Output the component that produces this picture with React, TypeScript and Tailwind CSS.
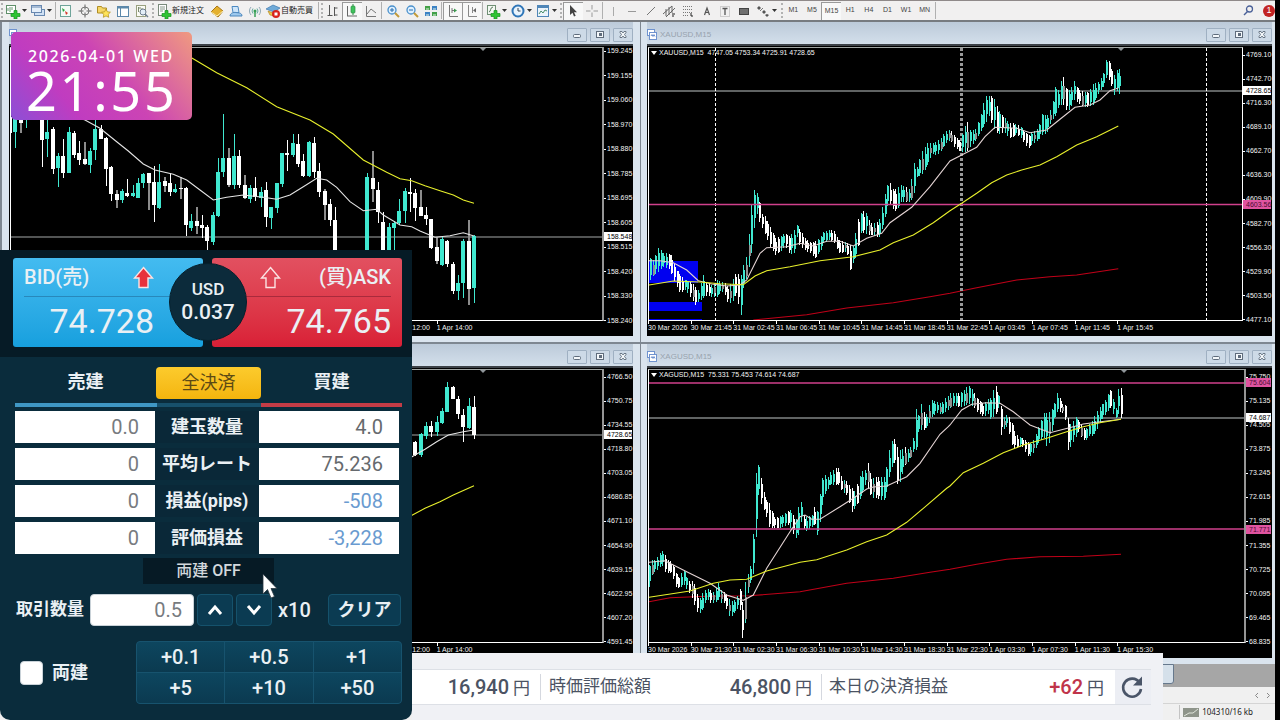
import type { ReactNode } from 'react';

type Pt = [number, number];
type Candle = [x: number, high: number, top: number, bottom: number, low: number, kind: 'c' | 'w' | 'g'];
type Range = [x: number, high: number, low: number];

const AQUA = '#40e8d0';
const YELLOW = '#e8f02c';
const RED = '#c00018';
const PINK = '#d0408c';

/* Series are kept in thirds of a pixel, relative to the plot origin. */
const shift = (points: Pt[], dx: number, dy: number): Pt[] => points.map(([x, y]) => [x + dx, y + dy]);
const shiftRange = (r: Range[], dx: number, dy: number): Range[] => r.map(([x, h, l]) => [x + dx, h + dy, l + dy]);
const shiftCandles = (list: Candle[], dx: number, dy: number): Candle[] =>
  list.map(([x, h, t, b, l, k]) => [x + dx, h + dy, t + dy, b + dy, l + dy, k]);

function Line({ points, color }: { points: Pt[]; color: string }) {
  return (
    <polyline
      points={points.map(([x, y]) => `${(x / 3).toFixed(1)},${(y / 3).toFixed(1)}`).join(' ')}
      fill="none"
      stroke={color}
      strokeWidth="1.1"
    />
  );
}

function Candles({ list }: { list: Candle[] }) {
  return (
    <g shapeRendering="crispEdges">
      {list.map(([x, h, t, b, l, k], i) => {
        const cx = Math.round(x / 3 - 0.5);
        const color = k === 'c' ? AQUA : '#ffffff';
        return (
          <g key={i}>
            <rect x={k === 'g' ? cx - 1 : cx} y={h / 3} width={k === 'g' ? 2 : 1} height={(l - h) / 3} fill={k === 'g' ? '#8c8c8c' : color} />
            <rect x={cx - 2} y={t / 3} width={4} height={Math.max(1, (b - t) / 3)} fill={color} />
          </g>
        );
      })}
    </g>
  );
}

function DenseCandles({ ranges }: { ranges: Range[] }) {
  const out: ReactNode[] = [];
  const last = ranges[ranges.length - 1][0];
  const at = (x: number): [number, number] => {
    let i = 0;
    while (i < ranges.length - 2 && ranges[i + 1][0] < x) i++;
    const [x0, h0, l0] = ranges[i];
    const [x1, h1, l1] = ranges[i + 1];
    const f = Math.min(1, Math.max(0, (x - x0) / (x1 - x0)));
    return [h0 + (h1 - h0) * f, l0 + (l1 - l0) * f];
  };
  let n = 0;
  for (let x = ranges[0][0]; x <= last; x += 8) {
    const r = Math.abs(Math.sin(n * 12.9898) * 43758.5453) % 1;
    const q = Math.abs(Math.sin(n * 78.233 + 4) * 12543.123) % 1;
    const [h, l] = at(x);
    const [nh, nl] = at(x + 8);
    const [ph, pl] = at(x - 8);
    const size = l - h;
    const slope = nh + nl - ph - pl;
    const up = slope < -12 ? q > 0.1 : slope > 12 ? q > 0.75 : q > 0.4;
    const top = h + size * (0.05 + r * 0.3);
    const bottom = l - size * (0.05 + q * 0.3);
    const grey = r > 0.86;
    const color = up ? AQUA : '#ffffff';
    const px = Math.round(x / 3);
    out.push(
      <g key={n}>
        <rect x={px} y={h / 3} width={1} height={size / 3} fill={color} />
        <rect x={px} y={top / 3} width={2} height={Math.max(1, (bottom - top) / 3)} fill={grey ? '#909090' : color} />
      </g>,
    );
    n++;
  }
  return <g shapeRendering="crispEdges">{out}</g>;
}

function Level({ y, color }: { y: number; color: string }) {
  return <line x1="0" x2="100%" y1={y} y2={y} stroke={color} strokeWidth="1.3" />;
}

function Marker({ x }: { x: number }) {
  return <path d={`M${x - 3} 0h6l-3 3z`} fill="#8f9599" />;
}

/* ---------- chart data ---------- */

const jpyCandles: Candle[] = [
  ...shiftCandles(
    [
      [31, 10, 20, 68, 90, 'w'], [47, 20, 20, 65, 115, 'c'], [63, 20, 30, 40, 70, 'g'], [79, 20, 20, 30, 55, 'c'],
      [127, 20, 20, 90, 172, 'w'], [143, 20, 65, 88, 140, 'c'], [159, 50, 58, 178, 192, 'w'], [175, 130, 138, 175, 230, 'c'],
      [191, 88, 138, 188, 205, 'w'], [207, 52, 65, 190, 190, 'c'], [223, 62, 68, 135, 145, 'w'], [239, 92, 128, 150, 165, 'w'],
      [255, 95, 148, 163, 165, 'g'], [271, 115, 123, 166, 190, 'c'], [287, 20, 58, 120, 150, 'c'], [303, 45, 58, 87, 87, 'w'],
      [319, 82, 85, 177, 228, 'w'], [335, 168, 170, 252, 272, 'w'], [351, 240, 252, 270, 293, 'g'], [367, 238, 243, 270, 280, 'c'],
      [383, 207, 250, 258, 262, 'w'], [399, 225, 250, 258, 260, 'c'], [415, 205, 218, 263, 263, 'c'], [431, 190, 193, 218, 235, 'c'],
      [447, 190, 190, 218, 300, 'g'], [463, 168, 216, 285, 335, 'w'], [479, 162, 216, 293, 298, 'c'], [495, 200, 213, 228, 245, 'g'],
      [511, 190, 220, 246, 258, 'w'], [527, 222, 236, 246, 248, 'c'], [543, 200, 233, 238, 268, 'g'], [559, 230, 235, 345, 378, 'w'],
      [575, 312, 333, 353, 363, 'c'], [591, 290, 333, 348, 372, 'g'], [607, 315, 345, 353, 385, 'w'], [623, 345, 352, 392, 430, 'w'],
      [639, 305, 315, 397, 405, 'c'], [655, 143, 187, 318, 322, 'c'], [671, 12, 145, 187, 200, 'c'], [687, 115, 145, 226, 230, 'g'],
      [703, 72, 137, 225, 237, 'c'], [719, 120, 137, 226, 233, 'w'], [735, 195, 226, 265, 268, 'g'], [751, 225, 235, 268, 280, 'c'],
      [767, 200, 235, 262, 273, 'w'], [783, 232, 245, 265, 290, 'c'], [799, 215, 240, 322, 350, 'w'], [815, 290, 290, 323, 358, 'c'],
      [831, 218, 220, 293, 308, 'c'], [847, 128, 130, 222, 232, 'c'], [863, 90, 130, 134, 182, 'w'], [879, 72, 100, 136, 140, 'c'],
      [895, 72, 102, 162, 170, 'w'], [911, 132, 152, 197, 202, 'w'], [927, 93, 95, 198, 200, 'c'], [943, 82, 98, 185, 205, 'w'],
      [959, 158, 183, 245, 262, 'w'], [975, 238, 242, 285, 330, 'g'], [991, 268, 283, 330, 347, 'w'], [1007, 290, 330, 430, 430, 'w'],
      [1103, 190, 202, 450, 450, 'c'], [1119, 122, 205, 236, 275, 'g'], [1135, 215, 240, 305, 338, 'w'], [1151, 305, 335, 430, 430, 'w'],
      [1167, 340, 352, 430, 430, 'c'], [1183, 332, 340, 355, 430, 'c'], [1199, 268, 303, 340, 345, 'c'], [1215, 235, 242, 303, 340, 'c'],
    ],
    -33,
    186,
  ),
  ...shiftCandles(
    [
      [31, 475, 516, 522, 575, 'w'], [47, 508, 520, 565, 602, 'w'], [63, 510, 562, 587, 588, 'g'], [79, 562, 585, 598, 615, 'w'],
      [95, 597, 597, 683, 687, 'w'], [111, 650, 680, 723, 733, 'g'], [127, 648, 658, 735, 738, 'c'], [143, 660, 663, 733, 740, 'w'],
      [159, 725, 732, 813, 822, 'w'], [175, 765, 788, 812, 840, 'c'], [191, 658, 663, 788, 833, 'c'], [207, 600, 663, 808, 855, 'g'],
      [223, 645, 647, 805, 850, 'c'],
    ],
    1167,
    -84,
  ),
];

const jpyFast: Pt[] = [
  ...shift([[180, 5], [255, 30], [300, 55], [350, 95], [385, 123], [430, 162], [465, 180], [520, 193], [560, 210], [600, 240], [640, 270], [680, 262], [730, 255], [790, 262], [830, 268], [870, 255], [910, 230], [950, 205], [980, 210], [1010, 232], [1050, 275], [1090, 302], [1130, 298], [1150, 315], [1200, 345]], -33, 186),
  ...shift([[35, 620], [60, 633], [105, 652], [150, 647], [190, 638], [222, 648]], 1167, -84),
];
const jpySlow: Pt[] = [
  ...shift([[540, -175], [577, -155], [650, -112], [740, -67], [830, -10], [930, 30], [1000, 72], [1090, 150], [1160, 187], [1200, 206]], -33, 186),
  ...shift([[35, 482], [75, 497], [120, 512], [160, 525], [190, 540], [222, 550]], 1167, -84),
];

const gold2Candles = shiftCandles(
  [
    [47, 318, 322, 360, 363, 'w'], [63, 295, 298, 360, 365, 'c'], [79, 262, 272, 303, 313, 'c'], [95, 257, 272, 292, 305, 'w'],
    [111, 243, 262, 290, 303, 'c'], [127, 218, 228, 263, 267, 'c'], [143, 142, 155, 230, 232, 'c'], [159, 152, 155, 193, 193, 'w'],
    [175, 183, 192, 238, 252, 'w'], [191, 223, 240, 275, 320, 'w'], [207, 190, 213, 280, 283, 'c'], [223, 183, 215, 300, 312, 'w'],
  ],
  1167,
  -105,
);
const gold2Fast = shift([[0, 385], [36, 365], [75, 343], [110, 320], [145, 300], [190, 290], [222, 285]], 1167, -105);
const gold2Slow = shift([[0, 556], [36, 541], [75, 520], [120, 500], [160, 480], [222, 452]], 1167, -105);

const goldRanges: Range[] = [
  ...shiftRange(
    [
      [30, 715, 780], [40, 720, 765], [55, 680, 755], [70, 700, 740], [85, 700, 745], [95, 705, 765], [105, 745, 790], [120, 765, 820],
      [135, 780, 810], [150, 785, 830], [165, 800, 855], [175, 810, 845], [190, 765, 835], [200, 790, 825], [215, 795, 832],
      [230, 780, 830], [245, 785, 815], [255, 790, 825], [265, 800, 855], [280, 775, 840], [290, 755, 820], [296, 765, 870], [302, 765, 885],
      [308, 740, 810], [320, 705, 770], [330, 600, 720], [338, 510, 680], [346, 510, 570], [355, 530, 600], [365, 580, 620],
      [375, 590, 645], [390, 620, 680], [405, 655, 705], [420, 650, 695], [435, 640, 680], [450, 650, 705], [462, 630, 700],
      [470, 615, 650], [480, 630, 680], [495, 655, 690], [510, 665, 700], [525, 665, 715], [540, 650, 695], [550, 635, 670],
      [565, 630, 660], [580, 630, 665], [595, 660, 700], [610, 665, 700], [620, 665, 690], [628, 675, 755], [640, 680, 725],
      [650, 610, 705], [660, 580, 640], [675, 570, 640], [690, 610, 645], [705, 610, 650], [720, 595, 650], [730, 540, 610],
      [740, 495, 560], [750, 490, 555], [760, 510, 570], [770, 505, 575], [780, 495, 545], [795, 500, 545], [810, 510, 545],
      [820, 425, 530], [830, 440, 470], [845, 395, 465], [860, 370, 440], [875, 370, 400], [890, 365, 405], [905, 350, 390],
      [920, 330, 365], [930, 328, 360],
    ],
    -27,
    -84,
  ),
  ...shiftRange(
    [
      [15, 350, 385], [30, 360, 395], [50, 300, 395], [60, 330, 380], [75, 330, 365], [90, 290, 335], [105, 230, 315], [115, 228, 285],
      [128, 228, 320], [145, 270, 345], [160, 290, 335], [180, 310, 355], [195, 310, 345], [210, 320, 350], [225, 335, 375],
      [235, 345, 385], [250, 335, 370], [265, 325, 360], [275, 280, 345], [290, 290, 340], [305, 260, 300], [315, 200, 290],
      [325, 210, 260], [338, 160, 250], [345, 200, 270], [360, 215, 270], [370, 180, 240], [385, 210, 250], [400, 215, 260],
      [415, 215, 260], [430, 190, 255], [445, 185, 220], [460, 160, 200], [468, 120, 175], [478, 125, 180], [485, 150, 200],
      [490, 170, 228], [498, 150, 210], [510, 145, 225],
    ],
    903,
    -84,
  ),
];
const goldFast: Pt[] = [
  ...shift([[27, 722], [60, 722], [100, 728], [140, 750], [175, 782], [215, 792], [260, 798], [300, 795], [320, 780], [340, 740], [360, 700], [380, 683], [440, 680], [480, 670], [520, 678], [560, 664], [600, 664], [640, 678], [680, 655], [725, 640], [750, 608], [815, 562], [870, 500], [930, 423]], -27, -84),
  ...shift([[35, 405], [80, 382], [105, 350], [135, 322], [200, 325], [240, 338], [290, 330], [330, 298], [375, 262], [420, 255], [450, 240], [480, 212], [505, 204]], 903, -84),
];
const goldSlow: Pt[] = [
  ...shift([[27, 795], [100, 783], [180, 786], [240, 791], [310, 794], [345, 768], [380, 752], [450, 740], [540, 722], [640, 710], [720, 690], [760, 668], [820, 645], [880, 608], [930, 572]], -27, -84),
  ...shift([[35, 550], [80, 520], [125, 488], [170, 465], [215, 450], [270, 435], [320, 410], [380, 375], [440, 350], [505, 318]], 903, -84),
];
const goldLong: Pt[] = [
  ...shift([[340, 900], [370, 897], [500, 884], [620, 864], [760, 848], [870, 830]], -27, -84),
  ...shift([[0, 820], [80, 803], [200, 780], [300, 770], [380, 765], [505, 746]], 903, -84),
];

const silverRanges: Range[] = [
  ...shiftRange(
    [
      [27, 690, 755], [35, 675, 720], [45, 675, 710], [55, 660, 700], [65, 645, 690], [75, 660, 710], [85, 680, 715], [95, 675, 715],
      [105, 710, 755], [115, 725, 760], [130, 705, 750], [145, 740, 770], [160, 735, 800], [170, 775, 830], [178, 790, 835],
      [190, 770, 820], [200, 760, 790], [210, 765, 805], [220, 770, 805], [235, 745, 795], [245, 770, 805], [255, 770, 805],
      [265, 790, 845], [280, 800, 840], [290, 785, 820], [300, 760, 825], [307, 800, 908], [316, 735, 860], [325, 710, 750],
      [335, 680, 740], [340, 578, 710], [348, 392, 590], [355, 390, 480], [365, 440, 515], [375, 490, 530], [388, 505, 580],
      [400, 545, 580], [415, 545, 580], [430, 540, 575], [445, 525, 570], [455, 525, 585], [465, 560, 612], [475, 515, 600],
      [483, 500, 560], [490, 540, 580], [500, 545, 590], [515, 540, 575], [525, 510, 570], [532, 530, 605], [540, 470, 555],
      [550, 410, 490], [560, 430, 465], [572, 410, 450], [585, 400, 450], [595, 400, 450], [605, 430, 470], [620, 440, 480],
      [635, 460, 530], [645, 470, 520], [655, 430, 500], [665, 410, 480], [675, 405, 450], [683, 385, 460], [695, 430, 490],
      [710, 425, 490], [720, 425, 495], [735, 425, 495], [742, 375, 455], [750, 325, 410], [762, 310, 375], [772, 340, 455],
      [782, 345, 435], [795, 335, 390], [808, 345, 375], [820, 305, 350], [828, 210, 345], [835, 240, 290], [845, 200, 285],
      [855, 250, 285], [865, 215, 270], [875, 195, 245], [890, 200, 235], [905, 205, 240], [915, 190, 230],
    ],
    -27,
    -105,
  ),
  ...shiftRange(
    [
      [0, 175, 220], [12, 175, 210], [25, 175, 215], [40, 165, 215], [55, 150, 205], [70, 170, 215], [85, 195, 235], [100, 205, 245],
      [115, 190, 235], [122, 190, 255], [135, 145, 240], [145, 180, 220], [150, 200, 305], [162, 250, 280], [172, 235, 275],
      [185, 265, 330], [195, 295, 345], [205, 305, 335], [218, 310, 335], [230, 320, 360], [240, 325, 365], [252, 310, 350],
      [265, 275, 325], [280, 235, 305], [290, 235, 335], [300, 230, 320], [310, 215, 255], [322, 170, 230], [335, 205, 230],
      [345, 210, 255], [352, 245, 345], [362, 270, 335], [375, 245, 310], [385, 255, 290], [395, 270, 310], [405, 285, 320],
      [415, 270, 305], [430, 250, 300], [440, 230, 285], [450, 215, 260], [465, 195, 240], [480, 160, 215], [490, 195, 240],
      [497, 220, 250], [506, 155, 235], [516, 160, 255],
    ],
    903,
    -105,
  ),
];
const silverFast: Pt[] = [
  ...shift([[27, 682], [75, 677], [140, 710], [210, 745], [260, 780], [310, 796], [340, 780], [380, 700], [450, 590], [480, 545], [495, 540], [515, 553], [540, 553], [600, 515], [640, 490], [680, 462], [700, 456], [740, 453], [800, 425], [840, 385], [900, 298], [925, 275]], -27, -105),
  ...shift([[0, 270], [35, 225], [65, 208], [110, 203], [150, 205], [190, 230], [240, 270], [300, 293], [370, 275], [400, 267], [440, 262], [513, 253]], 903, -105),
];
const silverSlow: Pt[] = [
  ...shift([[27, 787], [150, 768], [220, 745], [270, 735], [320, 733], [380, 708], [480, 682], [530, 674], [620, 645], [680, 620], [740, 600], [800, 562], [850, 520], [920, 460]], -27, -105),
  ...shift([[0, 453], [40, 413], [100, 385], [160, 353], [220, 330], [290, 310], [350, 290], [400, 275], [450, 263], [513, 253]], 903, -105),
];
const silverLong: Pt[] = [
  ...shift([[27, 800], [90, 788], [200, 784], [330, 782], [480, 770], [620, 745], [760, 730], [870, 712]], -27, -105),
  ...shift([[0, 703], [80, 688], [170, 673], [270, 665], [400, 664], [513, 658]], 903, -105),
];

/* ---------- chart windows ---------- */

type Tag = { text: string; className: string };

type WindowProps = {
  name: string;
  title?: string;
  summary?: string;
  frame: string;
  edge: string;
  axis: string;
  prices: string[];
  times: string[];
  timesClass: string;
  tags: Tag[];
  children: ReactNode;
};

function ChartWindow({ name, title, summary, frame, edge, axis, prices, times, timesClass, tags, children }: WindowProps) {
  const control = 'flex h-[14px] w-5 items-center justify-center rounded-[1px] border border-[#9fb0c2] bg-[#cddae7] text-[#5f6c7c]';
  return (
    <section aria-label={name} className={`flex min-w-0 flex-col bg-[#dae4ee] pb-[6px] ${frame}`}>
      <header className="flex h-[22px] shrink-0 items-center bg-gradient-to-b from-[#bccad9] to-[#d3dfeb] pt-[3px]">
        <svg width="10" height="11" viewBox="0 0 10 11" fill="#fff" stroke="#6f93cf" aria-hidden="true">
          <rect x=".5" y=".5" width="7" height="6" />
          <rect x="2.5" y="3.5" width="7" height="7" />
          <path d="M4 7l1-1.500 1 2 1-2 1 2" fill="none" />
        </svg>
        <h2 className="ml-[3px] flex-1 text-[8px] text-[#98a3ae]">{title}</h2>
        <div className="flex gap-[3px]">
          <button type="button" aria-label="Minimize" className={control}>
            <svg width="8" height="6" viewBox="0 0 8 6"><rect x=".5" y="2.500" width="7" height="3" rx="1" fill="#f4f8fb" stroke="currentColor" /></svg>
          </button>
          <button type="button" aria-label="Maximize" className={control}>
            <svg width="8" height="7" viewBox="0 0 8 7"><rect x=".5" y=".5" width="7" height="6" fill="#f4f8fb" stroke="currentColor" /><rect x="3" y="2" width="3" height="3" fill="currentColor" /></svg>
          </button>
          <button type="button" aria-label="Close" className={control}>
            <svg width="8" height="7" viewBox="0 0 8 7"><path d="M1 .5h2l1 1.500 1-1.500h2v1L5.500 3.500 7 5.500v1H5L4 5 3 6.500H1v-1l1.500-2L1 1.500z" fill="#f4f8fb" stroke="currentColor" strokeWidth=".9" /></svg>
          </button>
        </div>
      </header>
      <div className="flex flex-1 border-t-2 border-[#3d4248] bg-black pt-px pl-px text-[7px] leading-[8px] text-[#f4f4f4]">
        <div className="flex min-w-0 flex-1 flex-col">
          <div className={`relative flex-1 overflow-hidden border-t border-b border-l border-t-[#a0a5a3] border-b-white border-l-white ${edge}`}>
            <svg width="100%" height="100%" className="absolute inset-0" role="img" aria-label={`${name} chart`}>{children}</svg>
            {summary && (
              <p className="absolute top-px left-[2px] flex items-center gap-[2px] whitespace-pre">
                <svg width="6" height="4" aria-hidden="true"><path d="M0 0h6L3 4z" fill="#fff" /></svg>
                {summary}
              </p>
            )}
          </div>
          <div className="h-[15px] shrink-0 overflow-hidden">
            <div className="grid w-[512px] grid-cols-12 whitespace-nowrap">
              {times.map((t, i) => (
                <span key={t} className={`flex flex-col before:h-[3px] before:w-px before:bg-white ${i === 0 ? timesClass : ''}`}>{t}</span>
              ))}
            </div>
          </div>
        </div>
        <div className={`relative flex shrink-0 flex-col justify-between ${axis}`}>
          {prices.map((p) => (
            <span key={p} className="flex items-center gap-px before:h-px before:w-[2px] before:bg-white">{p}</span>
          ))}
          {tags.map((t) => (
            <span key={t.text} className={`absolute right-px left-0 flex h-[9px] items-center pl-[3px] ${t.className}`}>{t.text}</span>
          ))}
        </div>
      </div>
    </section>
  );
}

const jpyPrices = ['159.245', '159.155', '159.060', '158.970', '158.880', '158.785', '158.695', '158.605', '158.515', '158.420', '158.330', '158.240'];
const goldPrices = ['4769.10', '4742.70', '4716.30', '4689.10', '4662.70', '4636.30', '4609.90', '4582.70', '4556.30', '4529.90', '4503.50', '4477.10'];
const gold2Prices = ['4766.50', '4750.75', '4734.55', '4718.80', '4703.05', '4686.85', '4671.10', '4654.90', '4639.15', '4622.95', '4607.20', '4591.45'];
const silverPrices = ['75.750', '75.135', '74.505', '73.875', '73.245', '72.615', '71.985', '71.355', '70.725', '70.095', '69.465', '68.835'];
const days = ['31 Mar', '31 Mar', '31 Mar', '31 Mar', '31 Mar', '31 Mar', '1 Apr', '1 Apr', '1 Apr', '1 Apr'];
const goldTimes = ['30 Mar 2026', '30 Mar 21:45', ...['02', '06', '10', '14', '18', '22'].map((h, i) => `${days[i]} ${h}:45`), ...['03', '07', '11', '15'].map((h, i) => `${days[6 + i]} ${h}:45`)];
const silverTimes = ['30 Mar 2026', '30 Mar 21:30', ...['02', '06', '10', '14', '18', '22'].map((h, i) => `${days[i]} ${h}:30`), ...['03', '07', '11', '15'].map((h, i) => `${days[6 + i]} ${h}:30`)];
const leftTimes = ['1 Apr 12:00', '1 Apr 14:00'];
const whiteTag = 'bg-white text-black';
const pinkTag = 'bg-[#e054a0] text-[#4a0c30]';

/* ---------- toolbar ---------- */

function Icon({ children }: { children: ReactNode }) {
  return <svg width="16" height="16" viewBox="0 0 16 16" fill="none" strokeWidth="1" className="shrink-0" aria-hidden="true">{children}</svg>;
}

const plus = <path d="M9 7.500h3v3h3v3h-3v2.500H9v-2.500H6v-3h3z" fill="#2fc433" stroke="#159420" strokeWidth=".7" />;

const icons: Record<string, ReactNode> = {
  newChart: <><rect x="1.500" y="2.500" width="9" height="8" fill="#fff" stroke="#5f8f6a" /><path d="M3 8V5M5 9V4M7 7V4" stroke="#6d9a74" />{plus}</>,
  profiles: <><rect x="4.500" y="6.500" width="10" height="6" fill="#cfe0f4" stroke="#6888b0" /><rect x="1.500" y="2.500" width="10" height="7" fill="#e5effa" stroke="#6888b0" /><path d="M2 4h9" stroke="#6888b0" /></>,
  market: <><rect x="2.500" y="2.500" width="10" height="11" fill="#f4fbf6" stroke="#6fa49a" /><path d="M4 5l3 2-2 2z" fill="#2aa745" /><path d="M7 8l3 2-2 2z" fill="#d8362b" /></>,
  target: <><circle cx="8" cy="8" r="4" stroke="#777" /><path d="M8 1.500v5M8 9.500v5M1.500 8h5M9.500 8h5" stroke="#666" /></>,
  navigator: <><path d="M1.500 3.500h4l1 1.500h4v5h-9z" fill="#f6d768" stroke="#b08d25" /><path d="M10 6l1.400 2.800 3 .4-2.200 2.100.5 3L10 12.900l-2.700 1.400.5-3-2.200-2.100 3-.4z" fill="#ffe45a" stroke="#b79622" strokeWidth=".8" /></>,
  terminal: <><rect x="2.500" y="3.500" width="11" height="10" fill="#fff" stroke="#5c88ab" /><path d="M3 4.500h10" stroke="#5c88ab" strokeWidth="2" /><path d="M5.500 5v8" stroke="#5c88ab" /></>,
  tester: <><rect x="2.500" y="2.500" width="9" height="11" fill="#fbfbf4" stroke="#99a07f" /><path d="M4.500 9V4M4.500 5H7M8 9V5" stroke="#7d8a70" /><circle cx="9" cy="9" r="3" fill="#e3eef8" stroke="#6d7c8d" /><path d="M11 11l3 3" stroke="#6d7c8d" strokeWidth="1.500" /></>,
  order: <><rect x="2.500" y="1.500" width="8" height="11" fill="#fff" stroke="#7a8a7c" /><path d="M4 4h5M4 6h5M4 8h3" stroke="#8a9a8c" />{plus}</>,
  book: <><path d="M2 9l6-6 6 5-5 6z" fill="#e4b02e" stroke="#a87615" /><path d="M2 9l6 4 6-5" stroke="#fff3b8" /></>,
  person: <><path d="M4 3.500h6l1 6H5z" fill="#cfe6fa" stroke="#4d8ac2" /><path d="M2 13c0-3 4-4 6-3.500s6 0 6 3.500z" fill="#9ec9ee" stroke="#4d86bb" /></>,
  signal: <><path d="M4 4a6 6 0 000 8M12 4a6 6 0 010 8" stroke="#93aab5" /><path d="M6 5.500a4 4 0 000 5M10 5.500a4 4 0 010 5" stroke="#65a9a0" /><circle cx="8" cy="8" r="1.500" fill="#37a055" /><path d="M8 9v5" stroke="#37a055" strokeWidth="1.500" /></>,
  auto: <><path d="M1 6l7-4 7 3-6 4z" fill="#6faad8" stroke="#3d79ae" strokeWidth=".7" /><path d="M3 8l5 2 4-2-2 5-5-1z" fill="#eec44a" stroke="#b28a1b" strokeWidth=".7" /><circle cx="11" cy="11" r="4" fill="#d8231c" /><rect x="9.500" y="9.500" width="3" height="3" fill="#fff" /></>,
  bars: <path d="M4.500 2v11M2.500 12.500h5M9.500 4v9M9.500 5h3M12.500 12h-3" stroke="#555" />,
  candle: <><path d="M3.500 3v10M3 13h10" stroke="#666" /><rect x="7" y="3" width="4" height="7" rx="1" fill="#3fc25d" stroke="#2c8f44" strokeWidth=".7" /><path d="M9 1v2M9 10v2" stroke="#2c8f44" /></>,
  lineChart: <path d="M3.500 3v10.500H13M4 11l4-5 5 4" stroke="#777" />,
  zoomIn: <><circle cx="7" cy="7" r="4" fill="#dff0ff" stroke="#4a90cc" strokeWidth="1.300" /><path d="M10 10l4 4" stroke="#c39a38" strokeWidth="2" /><path d="M5 7h4M7 5v4" stroke="#2a6fae" /></>,
  zoomOut: <><circle cx="7" cy="7" r="4" fill="#dff0ff" stroke="#4a90cc" strokeWidth="1.300" /><path d="M10 10l4 4" stroke="#c39a38" strokeWidth="2" /><path d="M5 7h4" stroke="#2a6fae" /></>,
  tile: <><rect x="2" y="3" width="5" height="4" fill="#43a047" /><rect x="9" y="3" width="5" height="4" fill="#3d82c4" /><rect x="2" y="9" width="5" height="4" fill="#3d82c4" /><rect x="9" y="9" width="5" height="4" fill="#43a047" /><path d="M3 6h3M10 6h3M3 12h3M10 12h3" stroke="#e4f2e5" /></>,
  scroll: <><path d="M4.500 2v11.500H13" stroke="#777" /><path d="M7 7.500h3M7 5v5" stroke="#777" /><path d="M9 5.500l3 2-3 2z" fill="#3a9a4e" /></>,
  shiftEnd: <><path d="M4.500 2v11.500H13M8.500 4v6" stroke="#888" /><path d="M12 5l-3 2.500 3 2z" fill="#666" /></>,
  indicators: <><rect x="2.500" y="2.500" width="8" height="9" fill="#f3f8f2" stroke="#6f8f74" /><path d="M4 9c2 0 1-5 4-5" stroke="#55775a" />{plus}</>,
  period: <><circle cx="8" cy="8" r="5.500" fill="#e8f3fd" stroke="#2f76b8" strokeWidth="2" /><path d="M8 5v3h2.500" stroke="#345" /></>,
  template: <><rect x="2.500" y="2.500" width="11" height="11" fill="#eaf3fb" stroke="#4f86b8" /><path d="M3 4h10" stroke="#4f86b8" strokeWidth="2" /><path d="M4 11l2-3 2 2 2-3 2 1" stroke="#4b8f6a" /></>,
  cursor: <path d="M5 2v10l2.500-2.200L9 13.500l1.700-.8L9 9.200h3z" fill="#444" />,
  cross: <path d="M8 2v4.500M8 9.500V14M2 8h4.500M9.500 8H14" stroke="#999" />,
  vline: <path d="M8.500 4v9" stroke="#aaa" />,
  hline: <path d="M4 8.500h8" stroke="#999" />,
  trend: <path d="M4 12l8-8" stroke="#777" />,
  channel: <><path d="M2 11l9-8M5 14l9-9M5 6v7M8 4v8M11 3v7" stroke="#666" /><path d="M11 11h3M11 13h2" stroke="#222" /></>,
  fibo: <><path d="M3 3.500h9M3 6.500h9M3 9.500h9M3 12.500h6" stroke="#777" strokeDasharray="1 1" /><path d="M11 10v3h2" stroke="#222" /></>,
  text: <path d="M5.500 12l2.500-7 2.500 7M6.500 9.500h3" stroke="#555" strokeWidth="1.200" />,
  label: <><rect x="3.500" y="3.500" width="9" height="10" stroke="#aaa" strokeDasharray="1 1" /><path d="M5.500 5.500h5M8 5.500V12" stroke="#555" strokeWidth="1.300" /></>,
  shape: <rect x="3.500" y="5.500" width="9" height="6" fill="#707070" stroke="#444" />,
  arrows: <><path d="M2 5l2-2 2 2-2 2zM7 9l2-2 2 2-2 2z" fill="#555" /><path d="M10 12l2-1 2 1-2 2z" fill="#555" /><path d="M5 8l3-3" stroke="#777" /></>,
};

function Tool({ icon, pressed, text }: { icon?: string; pressed?: boolean; text?: string }) {
  return (
    <button
      type="button"
      aria-label={text ?? icon}
      className={`flex h-[18px] min-w-0 flex-1 items-center justify-center text-[7px] text-[#444] ${pressed ? 'border-t border-l border-[#9a9a9a] bg-[#f8f8f8]' : ''}`}
    >
      {icon ? <Icon>{icons[icon]}</Icon> : text}
    </button>
  );
}

function DropTool({ icon }: { icon: string }) {
  return (
    <button type="button" aria-label={icon} className="flex w-[25px] items-center pl-px">
      <Icon>{icons[icon]}</Icon>
      <svg width="5" height="3" className="ml-px" aria-hidden="true"><path d="M0 0h5L2.500 3z" fill="#333" /></svg>
    </button>
  );
}

function WideTool({ icon, text }: { icon: string; text: string }) {
  return (
    <button type="button" className="flex w-[53px] items-center pl-px text-[8px] whitespace-nowrap text-[#222]">
      <Icon>{icons[icon]}</Icon>
      {text}
    </button>
  );
}

const Sep = () => <span className="mx-px h-[17px] w-px shrink-0 bg-[#b0b0b0]" />;
const Grip = () => <span className="mx-px h-[15px] w-[2px] shrink-0 border-l-2 border-dotted border-[#b2b2b2]" />;

function Toolbar() {
  return (
    <nav aria-label="Toolbar" className="flex h-[22px] shrink-0 items-center overflow-hidden border-t border-b-2 border-t-[#8f8989] border-b-[#777b80] bg-[#f1f0f0] font-['Liberation_Sans','Noto_Sans_CJK_JP',sans-serif]">
      <Grip />
      <DropTool icon="newChart" />
      <DropTool icon="profiles" />
      <Sep />
      <div className="flex w-[94px]">
        {['market', 'target', 'navigator', 'terminal', 'tester'].map((n) => <Tool key={n} icon={n} />)}
      </div>
      <Grip />
      <WideTool icon="order" text="新規注文" />
      <div className="flex w-[56px]">
        {['book', 'person', 'signal'].map((n) => <Tool key={n} icon={n} />)}
      </div>
      <WideTool icon="auto" text="自動売買" />
      <Sep />
      <Grip />
      <div className="flex w-[56px]">
        <Tool icon="bars" />
        <Tool icon="candle" pressed />
        <Tool icon="lineChart" />
      </div>
      <Sep />
      <div className="flex w-[57px]">
        {['zoomIn', 'zoomOut', 'tile'].map((n) => <Tool key={n} icon={n} />)}
      </div>
      <Sep />
      <div className="flex w-[38px]">
        <Tool icon="scroll" pressed />
        <Tool icon="shiftEnd" pressed />
      </div>
      <Sep />
      <DropTool icon="indicators" />
      <DropTool icon="period" />
      <DropTool icon="template" />
      <Grip />
      <div className="flex w-[38px]">
        <Tool icon="cursor" pressed />
        <Tool icon="cross" />
      </div>
      <Sep />
      <div className="flex w-[168px]">
        {['vline', 'hline', 'trend', 'channel', 'fibo', 'text', 'label', 'shape', 'arrows'].map((n) => <Tool key={n} icon={n} />)}
      </div>
      <svg width="8" height="3" aria-hidden="true"><path d="M0 0h5L2.500 3z" fill="#333" /></svg>
      <Grip />
      <div className="flex w-[150px]">
        {['M1', 'M5', 'M15', 'H1', 'H4', 'D1', 'W1', 'MN'].map((n) => <Tool key={n} text={n} pressed={n === 'M15'} />)}
      </div>
      <Sep />
      <div className="ml-auto flex items-center gap-[9px]">
        <svg width="11" height="11" viewBox="0 0 11 11" fill="none" stroke="#4a6098" aria-hidden="true"><circle cx="6.500" cy="4" r="3" strokeWidth="1.300" /><path d="M4.500 6.500L1 10" strokeWidth="1.500" /></svg>
        <span className="flex h-3 w-3 items-center justify-center rounded-full bg-[#c22323] text-[9px] text-white">1</span>
      </div>
    </nav>
  );
}

/* ---------- overlays ---------- */

function Clock() {
  return (
    <div className="absolute top-8 left-[11px] flex h-[88px] w-[181px] flex-col rounded-[5px] bg-[linear-gradient(50deg,#8c4fd6_0%,#c03cc0_28%,#cc44b4_55%,#f09a80_100%)] pt-[15px] pl-[15px] font-['Noto_Sans',sans-serif] text-white">
      <p className="pl-[2px] text-base leading-[18px] font-medium tracking-widest">2026-04-01 WED</p>
      <p className="text-[54px] leading-[50px] tracking-wider">21:55</p>
    </div>
  );
}

function UpArrow({ fill }: { fill: string }) {
  return (
    <svg width="21" height="23" viewBox="0 0 21 23" aria-hidden="true">
      <path d="M10.500 1.500L19.500 12h-4.500v9.500H6V12H1.500z" fill={fill} stroke="#fbe3e3" strokeWidth="1.400" />
    </svg>
  );
}

const rows: [string, string, string, string][] = [
  ['建玉数量', '0.0', '4.0', 'text-[#666a6e]'],
  ['平均レート', '0', '75.236', 'text-[#666a6e]'],
  ['損益(pips)', '0', '-508', 'text-[#6a9bd0]'],
  ['評価損益', '0', '-3,228', 'text-[#6a9bd0]'],
];

function OrderPanel() {
  const step = 'flex h-8 w-9 items-center justify-center rounded-[4px] border border-[#15526c] bg-[#0b3b52]';
  return (
    <form className="absolute top-[250px] bottom-0 left-0 flex w-[412px] flex-col rounded-b-[10px] bg-[#0a2c3c] font-['Roboto','Noto_Sans_CJK_JP',sans-serif] text-[#eaf0f4]">
      <div className="relative flex h-[107px] shrink-0 gap-[9px] bg-[#061b26] pt-2 pr-[10px] pb-[10px] pl-[13px]">
        <button type="button" className="flex flex-1 flex-col rounded-[3px] bg-gradient-to-b from-[#43bbf0] to-[#16a0de] px-[11px] text-left">
          <span className="flex h-[39px] w-full items-center justify-between border-b border-[#2888bb] pr-[38px] text-[20px] font-medium">BID(売)<UpArrow fill="#e8323c" /></span>
          <span className="w-full pr-[38px] text-right text-[34px] leading-[48px]">74.728</span>
        </button>
        <button type="button" className="flex flex-1 flex-col rounded-[3px] bg-gradient-to-b from-[#e25060] to-[#d91f36] px-[11px] text-left">
          <span className="flex h-[39px] w-full items-center justify-between border-b border-[#a92a3c] pl-[37px] text-[20px] font-medium"><UpArrow fill="none" />(買)ASK</span>
          <span className="w-full text-right text-[34px] leading-[48px]">74.765</span>
        </button>
        <div className="absolute top-[13px] left-[169px] flex h-[78px] w-[78px] flex-col items-center justify-center rounded-full border border-[#06202c] bg-[#0c2b3b] font-medium">
          <span className="text-[17px] leading-[20px]">USD</span>
          <span className="text-[21px] leading-[26px]">0.037</span>
        </div>
      </div>
      <div className="flex flex-col pr-[10px] pl-[15px]">
        <div className="flex h-[46px] items-center pt-1 text-lg font-bold">
          <span className="flex-1 text-center">売建</span>
          <button type="button" className="mt-[2px] h-8 w-[105px] rounded-[4px] bg-gradient-to-b from-[#fccb2c] to-[#f4b50c] font-normal text-[#5c4a14]">全決済</button>
          <span className="flex-1 text-center">買建</span>
        </div>
        <div className="flex h-1">
          <span className="flex-1 bg-[#3f97c4]" />
          <span className="w-[104px] bg-[#17506b]" />
          <span className="flex-1 bg-[#c43c46]" />
        </div>
      </div>
      <table className="-my-px mr-[13px] ml-[15px] border-separate border-spacing-x-0 border-spacing-y-[5px] text-[20px] leading-[30px]">
        <tbody>
          {rows.map(([label, sell, buy, tone]) => (
            <tr key={label} className="h-8">
              <td className="w-[140px] bg-white p-0 pr-4 text-right text-[#777b7f]">{sell}</td>
              <th scope="row" className="bg-[#0a2838] p-0 text-lg leading-[30px] font-bold">{label}</th>
              <td className={`w-[140px] bg-white p-0 pr-4 text-right ${tone}`}>{buy}</td>
            </tr>
          ))}
        </tbody>
      </table>
      <p className="ml-[143px] flex h-[26px] w-[131px] items-center justify-center bg-[#061a25] text-base font-medium text-[#d2d8dc]">両建 OFF</p>
      <div className="mt-[10px] flex items-center pr-[11px] pl-4">
        <label htmlFor="qty" className="w-[74px] text-[17px] font-bold whitespace-nowrap">取引数量</label>
        <input id="qty" defaultValue="0.5" className="h-8 w-[104px] rounded-[4px] border border-[#c9d2d8] bg-white pr-[11px] text-right text-[20px] text-[#777b7f]" />
        <button type="button" aria-label="Increase" className={`${step} ml-[3px]`}>
          <svg width="16" height="12" viewBox="0 0 16 12" fill="none" stroke="#fff" strokeWidth="3"><path d="M2 10l6-7 6 7" /></svg>
        </button>
        <button type="button" aria-label="Decrease" className={`${step} ml-[3px]`}>
          <svg width="16" height="12" viewBox="0 0 16 12" fill="none" stroke="#fff" strokeWidth="3"><path d="M2 2l6 7 6-7" /></svg>
        </button>
        <span className="ml-[6px] text-[20px] font-medium">x10</span>
        <button type="button" className="ml-auto h-8 w-[73px] rounded-[4px] border border-[#15526c] bg-[#0b3b52] text-lg font-bold">クリア</button>
      </div>
      <div className="mt-[15px] flex items-center pr-[10px] pl-5">
        <label className="flex flex-1 items-center gap-[9px] text-lg font-bold">
          <input type="checkbox" className="h-6 w-[23px] appearance-none rounded-[4px] border border-[#c9d2d8] bg-white" />
          両建
        </label>
        <div className="grid w-[266px] grid-cols-3 gap-px overflow-hidden rounded-[4px] border border-[#17536e] bg-[#17536e]">
          {['+0.1', '+0.5', '+1', '+5', '+10', '+50'].map((v) => (
            <button key={v} type="button" className="h-[30px] bg-gradient-to-b from-[#0d465f] to-[#0b3a50] text-[20px] leading-[30px] font-medium">{v}</button>
          ))}
        </div>
      </div>
      <svg width="16" height="26" viewBox="0 0 16 26" className="absolute top-[323px] left-[262px]" aria-hidden="true">
        <path d="M1 1v20l4.500-4.500L9 25l3.500-1.500L9 15.500h6z" fill="#fff" stroke="#24343d" strokeWidth=".8" />
      </svg>
    </form>
  );
}

function AccountBar() {
  return (
    <section aria-label="Account" className="absolute top-[653px] bottom-0 left-[412px] w-[751px] bg-[#f0f1f5] pt-4 pr-3 font-['Roboto','Noto_Sans_CJK_JP',sans-serif] text-[#4b5363]">
      <dl className="flex h-9 items-center border-t border-b border-[#dde0e6] bg-white text-[17px]">
        <dd className="flex w-[118px] items-baseline justify-end gap-1"><span className="text-[20px] font-medium">16,940</span><span className="text-[17px]">円</span></dd>
        <dt className="ml-[10px] flex h-[26px] items-center border-l border-[#d5d8df] pl-2">時価評価総額</dt>
        <dd className="flex flex-1 items-baseline justify-end gap-1"><span className="text-[20px] font-medium">46,800</span><span className="text-[17px]">円</span></dd>
        <dt className="ml-[9px] flex h-[26px] items-center border-l border-[#d5d8df] pl-[7px]">本日の決済損益</dt>
        <dd className="flex w-[156px] items-baseline justify-end gap-1"><span className="text-[20px] font-medium text-[#c0344a]">+62</span><span className="text-[17px]">円</span></dd>
        <dd className="ml-[11px] h-full">
          <button type="button" aria-label="Refresh" className="flex h-full w-9 items-center justify-center bg-[#eceef4] pr-[3px]">
            <svg width="26" height="26" viewBox="0 0 26 26" fill="none" stroke="#4a5568" aria-hidden="true">
              <path d="M20.500 8.500A9 9 0 1 0 22 15" strokeWidth="2.600" />
              <path d="M23 2.500v9h-9z" fill="#4a5568" stroke="none" />
            </svg>
          </button>
        </dd>
      </dl>
    </section>
  );
}

export default function App() {
  return (
    <main className="relative flex min-h-screen flex-col overflow-hidden bg-black pr-[5px] font-['Liberation_Sans','Noto_Sans_CJK_JP',sans-serif]">
      <Toolbar />
      <div className="grid flex-1 grid-cols-[638fr_634fr] grid-rows-2 gap-x-px gap-y-[2px] bg-[#7e8791] pl-[2px]">
        <ChartWindow
          name="USDJPY" frame="pr-[7px] pl-[7px]" edge="border-r-2 border-r-[#959595]" axis="w-[29px] pb-[11px]"
          prices={jpyPrices} times={leftTimes} timesClass="col-start-10" tags={[{ text: '158.548', className: `top-[185px] ${whiteTag}` }]}
        >
          <Level y={189} color="#6e7070" />
          <Candles list={jpyCandles} />
          <Line points={jpyFast} color="#e4e4e4" />
          <Line points={jpySlow} color={YELLOW} />
          <Marker x={472} />
        </ChartWindow>
        <ChartWindow
          name="XAUUSD" title="XAUUSD,M15" summary="XAUUSD,M15  4747.05 4753.34 4725.91 4728.65" frame="pr-[3px] pl-[6px]"
          edge="border-r border-r-white" axis="w-[29px] pt-1 pb-3" prices={goldPrices} times={goldTimes} timesClass=""
          tags={[{ text: '4728.65', className: `top-[39px] ${whiteTag}` }, { text: '4603.56', className: `top-[153px] ${pinkTag}` }]}
        >
          <rect x="0" y="213" width="49" height="22" fill="#0000f0" />
          <rect x="0" y="254" width="53" height="9" fill="#0000f0" />
          <rect x="0" y="271" width="53" height="1" fill="#0000f0" />
          <Level y={43} color="#808484" />
          <Line points={goldLong} color={RED} />
          <line x1="66.500" x2="66.500" y1="0" y2="100%" stroke="#fff" strokeDasharray="3 2" />
          <line x1="312.500" x2="312.500" y1="0" y2="100%" stroke="#9a9a9a" strokeWidth="3" strokeDasharray="3 2" />
          <line x1="557.500" x2="557.500" y1="0" y2="100%" stroke="#fff" strokeDasharray="3 2" />
          <DenseCandles ranges={goldRanges} />
          <Level y={156.5} color={PINK} />
          <Line points={goldFast} color="#e4d4d4" />
          <Line points={goldSlow} color={YELLOW} />
          <Marker x={472} />
        </ChartWindow>
        <ChartWindow
          name="XAUUSD short term" frame="pr-[7px] pl-[7px]" edge="border-r-2 border-r-[#959595]" axis="w-[29px] pt-1 pb-3"
          prices={gold2Prices} times={leftTimes} timesClass="col-start-10" tags={[{ text: '4728.65', className: `top-[61px] ${whiteTag}` }]}
        >
          <Level y={65} color="#6e7070" />
          <Candles list={gold2Candles} />
          <Line points={gold2Fast} color="#e4e4e4" />
          <Line points={gold2Slow} color={YELLOW} />
          <Marker x={472} />
        </ChartWindow>
        <ChartWindow
          name="XAGUSD" title="XAGUSD,M15" summary="XAGUSD,M15  75.331 75.453 74.614 74.687" frame="pr-[3px] pl-[6px]"
          edge="border-r-2 border-r-[#959595]" axis="w-[26px] pt-1 pb-3" prices={silverPrices} times={silverTimes} timesClass=""
          tags={[
            { text: '75.604', className: `top-[9px] ${pinkTag}` },
            { text: '74.687', className: `top-[44px] ${whiteTag}` },
            { text: '71.771', className: `top-[156px] ${pinkTag}` },
          ]}
        >
          <Level y={48} color="#808484" />
          <Line points={silverLong} color={RED} />
          <DenseCandles ranges={silverRanges} />
          <Level y={13} color={PINK} />
          <Level y={159} color={PINK} />
          <Line points={silverFast} color="#e4d4d4" />
          <Line points={silverSlow} color={YELLOW} />
          <Marker x={475} />
        </ChartWindow>
      </div>
      <div className="h-[23px] shrink-0 bg-[#a6a6a6] pl-[1140px]">
        <div className="h-5 w-[34px] rounded-br-[3px] border border-[#66788c] bg-[#d5e0ea]" />
      </div>
      <footer className="shrink-0 bg-[#f0f0f0] text-[#222]">
        <div className="flex h-4 items-center justify-end gap-2 pr-[3px]">
          <svg width="20" height="7" viewBox="0 0 20 7" fill="none" stroke="#888" aria-hidden="true"><path d="M6 1L3.500 3.500 6 6M15 1l2.500 2.500L15 6" /></svg>
        </div>
        <div className="flex h-[17px] items-center justify-end border-t border-[#d4d4d4] pr-[22px] font-['Noto_Sans',sans-serif] text-[8px]">
          <span className="mr-[3px] h-[14px] w-px bg-[#c4c4c4]" />
          <svg width="16" height="9" viewBox="0 0 16 9" className="mr-[3px]" aria-hidden="true"><rect width="16" height="9" fill="#8e948a" /><path d="M1 8l5-3 4 0 5-4" stroke="#dfe4da" fill="none" /></svg>
          104310/16 kb
        </div>
      </footer>
      <OrderPanel />
      <AccountBar />
      <Clock />
    </main>
  );
}
